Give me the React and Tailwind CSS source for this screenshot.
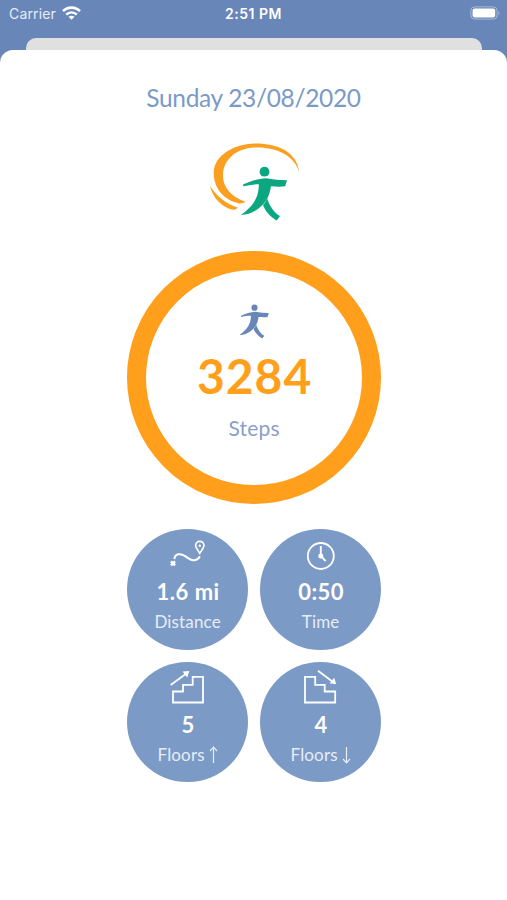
import React from "react";

function Walker({ className }) {
  return (
    <svg className={className} viewBox="240 165 49 55" fill="currentColor">
      <circle cx="264.5" cy="170.7" r="4.9" />
      <path d="M242.8 183.7 C250 180.3 259 177.4 266 177.2 C273 178.3 280 179.2 287 179.2 L285.2 185.2 C280 186.2 275 185.3 271 185.3 C270 191 268.6 197 264.3 202 C258 209.5 249.5 213.8 240.8 214 C248 209 254.3 202.5 257 195 C258.3 191 258.8 187.5 258.9 183.4 C253.5 183.2 248 184.2 243.4 185.2 Z" />
      <path d="M267 197.200 C269 203 273 211 280 215 L276.800 219.400 C270 216 265 209.500 263 204 C265 202 266.200 200 267 197.200 Z" />
    </svg>
  );
}

function Logo() {
  return (
    <div className="relative ml-[207px] mt-[28px] h-[82px] w-[96px]">
      <svg className="h-full w-full" viewBox="207 140 96 82" fill="#fb9f20">
        <path d="M299.200 171 C297 151 278 142.300 255 142.500 C232 143.300 213.500 155.500 213.700 172.500 C214 188 224.500 199.500 239.500 202.500 C242 202.500 243.800 201.800 245.600 200.800 C231 195.500 222.800 186 223 174.500 C223.400 157.500 237 147.800 254 146.600 C276 145.400 294.500 154.500 299.200 171 Z" />
        <path d="M210 184.700 C212.500 197.500 223 206.600 233.200 208.800 C235 208.800 236.500 207.900 237.900 206.700 C225.500 202.500 216.500 195 210 184.700 Z" />
      </svg>
      <Walker className="absolute left-[33px] top-[25px] h-[55px] w-[49px] text-[#0aa780]" />
    </div>
  );
}

function DistanceIcon() {
  return (
    <svg className="h-[43px] w-[60px]" viewBox="0 0 60 43" fill="none" stroke="white" strokeWidth="1.700">
      <path d="M16.300 30 C17 24.500 22.500 24 27 27 C31 30 34 32.300 37.500 31 C40 30.200 41.300 29 41.700 27.300" strokeWidth="2" />
      <path d="M41.800 24.400 C39.800 21 37.600 18.500 37.600 16.500 A4.200 4.200 0 0 1 46 16.500 C46 18.500 43.800 21 41.800 24.400 Z" />
      <circle cx="41.800" cy="16.700" r="1.200" fill="white" stroke="none" />
      <path d="M13 32.300 L17 36.300 M17 32.300 L13 36.300" strokeWidth="2.500" />
    </svg>
  );
}

function TimeIcon() {
  return (
    <svg className="h-[43px] w-[60px]" viewBox="0 0 60 43" fill="none" stroke="white">
      <circle cx="29.800" cy="27" r="13" strokeWidth="1.800" />
      <path d="M29.800 17 V27 L34.700 32.200" strokeWidth="1.900" />
      <circle cx="29.800" cy="27" r="2.500" fill="white" stroke="none" />
    </svg>
  );
}

function UpIcon() {
  return (
    <svg className="h-[43px] w-[60px]" viewBox="0 0 60 43" fill="none" stroke="white" strokeWidth="1.800">
      <path d="M15 40.500 V29.500 H25 V22.800 H34.700 V14.900 H45 V40.500 Z" />
      <path d="M12.700 23 L28 11.800" />
      <path d="M31.300 8.900 L29.200 15.400 L24.600 9.600 Z" fill="white" stroke="none" />
    </svg>
  );
}

function DownIcon() {
  return (
    <svg className="h-[43px] w-[60px]" viewBox="0 0 60 43" fill="none" stroke="white" strokeWidth="1.800">
      <path d="M14 40.500 V14.900 H24.200 V22.800 H33.700 V29.500 H44.200 V40.500 Z" />
      <path d="M27 8.800 L41.700 19.700" />
      <path d="M45.200 22.300 L38.700 21.300 L43.200 15.700 Z" fill="white" stroke="none" />
    </svg>
  );
}

function Arrow({ down }) {
  return (
    <svg className={down ? "h-[18px] w-[9px] rotate-180" : "h-[18px] w-[9px]"} viewBox="0 0 9 18" fill="none" stroke="currentColor" strokeWidth="1.200">
      <path d="M4.500 17 V1.200 M1 5 L4.500 1.200 L8 5" />
    </svg>
  );
}

function Stat({ icon, value, label, arrow }) {
  return (
    <div className="flex h-[120.500px] w-[120.500px] flex-col items-center rounded-full bg-[#7b9ac6] text-white">
      {icon}
      <div className="mt-[6px] h-[28px] pl-px text-[22px] font-bold leading-[28px] tracking-[0.5px]">{value}</div>
      <div className="mt-[5px] flex h-[22px] items-center gap-[4px] text-[17px] leading-[22px] tracking-[0.150px] text-[#e6edf8]">
        <span>{label}</span>
        {arrow}
      </div>
    </div>
  );
}

export default function App() {
  return (
    <div className="flex h-[900px] w-[507px] flex-col overflow-hidden bg-[#6886b8] font-['Lato',sans-serif]">
      <header className="grid h-[38px] shrink-0 grid-cols-3 font-['Inter',sans-serif] text-white">
        <div className="flex h-[28px] items-center gap-[6px] pl-[9px] text-[14px] text-[#e6edfa]">
          <span className="-mt-px tracking-[0.150px]">Carrier</span>
          <svg className="-mt-[2px] h-[14px] w-[19px]" viewBox="0 0 19 14" fill="none" stroke="white" strokeWidth="2.600">
            <path d="M1 5.200 C5.800 0.400 13.200 0.400 18 5.200" />
            <path d="M4.200 8.600 C7.300 5.700 11.700 5.700 14.800 8.600" />
            <path d="M6.500 10.800 C8.200 9.300 10.800 9.300 12.500 10.800 L9.500 13.800 Z" fill="white" stroke="none" />
          </svg>
        </div>
        <div className="flex h-[27px] items-center justify-center text-[14px] font-semibold tracking-[0.500px]">2:51 PM</div>
        <div className="flex h-[26px] items-center justify-end pr-[6px]">
          <svg className="h-[14px] w-[31px]" viewBox="0 0 31 14">
            <rect x="0.900" y="0.900" width="26.200" height="12.200" rx="3.600" fill="none" stroke="#a7bbdc" />
            <rect x="2.600" y="2.500" width="22.600" height="9" rx="2" fill="white" />
            <path d="M28.500 5 Q30.500 7 28.500 9 Z" fill="#a7bbdc" />
          </svg>
        </div>
      </header>
      <div className="mx-[25.500px] h-[12px] shrink-0 rounded-t-[10px] bg-[#dfe0df]" />
      <main className="flex grow flex-col rounded-t-[13px] bg-white">
        <h1 className="mt-[33px] h-[30px] text-center text-[24.500px] leading-[30px] tracking-[-0.330px] text-[#7b9ac6]">Sunday 23/08/2020</h1>
        <Logo />
        <section className="ml-[127.400px] mt-[28px] flex h-[253.400px] w-[253.400px] flex-col items-center rounded-full border-[19px] border-[#ff9f1c]">
          <Walker className="mt-[34px] h-[35px] w-[31px] text-[#6886b8]" />
          <div className="mt-[8px] h-[58px] pl-px text-[48px] font-bold leading-[58px] tracking-[1px] text-[#ff9f1c]">3284</div>
          <div className="mt-[10px] h-[26px] text-[21px] leading-[26px] tracking-[0.200px] text-[#8c9fc9]">Steps</div>
        </section>
        <section className="ml-[127.400px] mt-[24.700px] grid w-[253.500px] grid-cols-2 gap-x-[12.500px] gap-y-[12.200px]">
          <Stat icon={<DistanceIcon />} value="1.6 mi" label="Distance" />
          <Stat icon={<TimeIcon />} value="0:50" label="Time" />
          <Stat icon={<UpIcon />} value="5" label="Floors" arrow={<Arrow />} />
          <Stat icon={<DownIcon />} value="4" label="Floors" arrow={<Arrow down />} />
        </section>
      </main>
    </div>
  );
}
